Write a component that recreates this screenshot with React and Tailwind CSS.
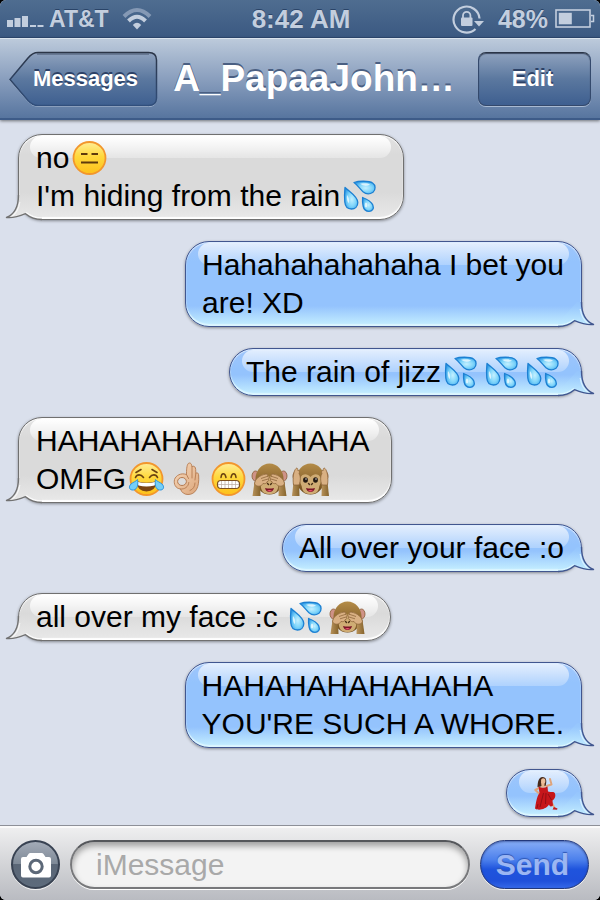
import React from "react";

function Drops() {
  return (
    <svg viewBox="0 0 41 36" className="inline-block h-9 w-[41px] align-[-8px]" role="img" aria-label="sweat droplets">
      <defs>
        <radialGradient id="drop" cx="0.55" cy="0.55" r="0.6">
          <stop offset="0" stopColor="#c4f0ff" />
          <stop offset="0.55" stopColor="#7dd4fa" />
          <stop offset="1" stopColor="#369fe8" />
        </radialGradient>
      </defs>
      <g fill="url(#drop)" stroke="#1c80d2" strokeWidth="1.3" strokeLinejoin="round">
        <path d="M5 9.5C9 13.5 17.8 18.5 17.8 24.5C17.8 28.5 15 31 11.5 31C8 31 5.2 28.5 4.8 24C4.4 19 4.5 14 5 9.5Z" />
        <path d="M14 4.5C18 3 29 2.5 32.6 5C35.8 7 35.8 12 33 14.2C30 16.2 26 16.2 23 13.7C20 11 17.5 7 14 4.5Z" />
        <path d="M22.6 19.5C26 20.8 31 23.3 32.8 27C34.4 31 32 33.3 29 33.3C25.6 33.3 23.7 31 23.1 28C22.6 25 22.4 22 22.6 19.5Z" />
      </g>
      <g fill="#fff" opacity="0.7">
        <path d="M7 17C8.5 19 9.500 21 9 25C7 24 6.500 20 7 17Z" />
        <path d="M20 5.800C24 5 28 5.200 30 6.500C27 8.500 23 8 20 5.800Z" />
        <ellipse cx="26" cy="27" rx="1.200" ry="2.500" />
      </g>
    </svg>
  );
}

function FaceBase() {
  return (
    <>
      <defs>
        <linearGradient id="face" x1="0" y1="0" x2="0" y2="1">
          <stop offset="0" stopColor="#ffee96" />
          <stop offset="0.45" stopColor="#ffd83c" />
          <stop offset="1" stopColor="#fdc01a" />
        </linearGradient>
      </defs>
      <circle cx="20.500" cy="18" r="16" fill="url(#face)" stroke="#f2962c" strokeWidth="1.800" />
    </>
  );
}

function Deadpan() {
  return (
    <svg viewBox="0 0 41 36" className="inline-block h-9 w-[41px] align-[-8px]" role="img" aria-label="expressionless face">
      <FaceBase />
      <path d="M12 14H18.500M22.500 14H29M12 22.500H29" stroke="#5e3a0c" strokeWidth="1.800" />
    </svg>
  );
}

function Joy() {
  return (
    <svg viewBox="0 0 41 36" className="inline-block h-9 w-[41px] align-[-8px]" role="img" aria-label="face with tears of joy">
      <FaceBase />
      <path d="M9.500 16.500C11 13 15 13 17.500 16.500M23.500 16.500C26 13 30 13 31.500 16.500M10 11.500L15 8.500M31 11.500L26 8.500" fill="none" stroke="#6b4310" strokeWidth="1.600" strokeLinecap="round" />
      <path d="M10 20Q20.500 23.500 31 20Q29.500 30.500 20.500 30.500Q11.500 30.500 10 20Z" fill="#7a4412" />
      <path d="M11 20.700Q20.500 23.500 30 20.700Q29.500 23 28.500 24.500Q20.500 26.500 12.500 24.500Q11.500 23 11 20.700Z" fill="#fff" />
      <g fill="#74cff8" stroke="#2690dc" strokeWidth="0.900">
        <path d="M11.500 18.500C12.500 23 11.500 28.500 7.500 29C3 29.500 2.300 25.500 5 23C7 21.200 10 20.500 11.500 18.500Z" />
        <path d="M29.500 18.500C28.500 23 29.500 28.500 33.500 29C38 29.500 38.700 25.500 36 23C34 21.200 31 20.500 29.500 18.500Z" />
      </g>
    </svg>
  );
}

function Grin() {
  return (
    <svg viewBox="0 0 41 36" className="inline-block h-9 w-[41px] align-[-8px]" role="img" aria-label="grinning face">
      <FaceBase />
      <path d="M13 16.500C13.500 11.500 17 11.500 18 16.500M23 16.500C24 11.500 27.500 11.500 28 16.500" fill="none" stroke="#6b4310" strokeWidth="1.500" strokeLinecap="round" />
      <rect x="9.500" y="19.500" width="22" height="8" rx="3.500" fill="#fff" stroke="#7d5020" strokeWidth="1.200" />
      <path d="M10 23.500H31M13.500 20V27M17 20V27M20.500 20V27M24 20V27M27.500 20V27" stroke="#b9a9a0" strokeWidth="0.700" />
    </svg>
  );
}

function OkHand() {
  return (
    <svg viewBox="0 0 41 36" className="inline-block h-9 w-[41px] align-[-8px]" role="img" aria-label="ok hand">
      <defs>
        <linearGradient id="skin" x1="0" y1="0" x2="1" y2="1">
          <stop offset="0" stopColor="#f8dabc" />
          <stop offset="1" stopColor="#dba57a" />
        </linearGradient>
      </defs>
      <path d="M19.500 13.500C19.500 10 19.500 4 21.500 2.300C23.500 1.300 24.800 3 25 6C26 4.500 28.500 5 28.700 8.500L28.800 12.500C30 11 31.700 12 31.700 15C32 20 31.500 25 29.500 28.500C27.500 32 24.500 33.500 21 33.500C17.500 33.500 14.500 31.500 13.500 28C8.500 27.500 6.500 23 7.500 18.500C8.800 14.500 14 11.500 19.500 13.500Z" fill="url(#skin)" stroke="#b47a50" strokeWidth="0.900" strokeLinejoin="round" />
      <ellipse cx="15" cy="20.500" rx="4.400" ry="4" fill="#dcdcdc" stroke="#b47a50" strokeWidth="1" />
      <path d="M19.500 13.500L21.500 17.500M13.500 28C17.500 28.500 21.500 26 21.800 21.500M25 6L25 17M28.800 12.500L28 19M23 29.500C26 28.500 28 25.500 28 22" fill="none" stroke="#b47a50" strokeWidth="0.900" strokeLinecap="round" />
    </svg>
  );
}

function MonkeyHead() {
  return (
    <>
      <defs>
        <linearGradient id="fur" x1="0" y1="0" x2="0" y2="1">
          <stop offset="0" stopColor="#b48c48" />
          <stop offset="1" stopColor="#6d4a1c" />
        </linearGradient>
        <linearGradient id="arm" x1="0" y1="0" x2="1" y2="0">
          <stop offset="0" stopColor="#b8925a" />
          <stop offset="1" stopColor="#86642c" />
        </linearGradient>
      </defs>
      <ellipse cx="6.500" cy="15" rx="3.500" ry="5" fill="#cf9287" stroke="#8a5d36" strokeWidth="0.800" />
      <ellipse cx="34.500" cy="15" rx="3.500" ry="5" fill="#cf9287" stroke="#8a5d36" strokeWidth="0.800" />
      <ellipse cx="20.500" cy="18" rx="14" ry="15.500" fill="url(#fur)" />
      <path d="M20.500 16C16 10.500 9.500 13.500 10 20C10.200 23 12 24.500 12 27C13 31.500 16 33 20.500 33C25 33 28 31.500 29 27C29 24.500 30.800 23 31 20C31.500 13.500 25 10.500 20.500 16Z" fill="#cfac74" />
      <path d="M18.500 22.500L19.500 23.500M22.500 22.500L21.500 23.500" stroke="#493015" strokeWidth="1.400" strokeLinecap="round" />
      <path d="M16 27Q20.500 28.200 25 27Q24 31 20.500 31Q17 31 16 27Z" fill="#7c1426" />
      <path d="M18 29.700Q20.500 28.500 23 29.700Q20.500 31.300 18 29.700Z" fill="#ee5672" />
    </>
  );
}

function SeeNoEvil() {
  return (
    <svg viewBox="0 0 41 36" className="inline-block h-9 w-[41px] align-[-8px]" role="img" aria-label="see-no-evil monkey">
      <MonkeyHead />
      <path d="M3.500 35L5.500 21L11 20L11.500 35Z" fill="url(#arm)" />
      <path d="M37.500 35L35.500 21L30 20L29.500 35Z" fill="url(#arm)" />
      <g fill="#d9b083" stroke="#8f673c" strokeWidth="0.800" strokeLinejoin="round">
        <path d="M5.500 23C6 18 10 14.500 17 13C19 13 19.500 14.800 18 15.500C20.500 15.500 21 17.500 19 18C20.500 19 19.500 20.800 18 20.700C18 22.500 15.500 23 14 22.500C12.500 25.500 8 26.500 5.500 23Z" />
        <path d="M35.500 23C35 18 31 14.500 24 13C22 13 21.500 14.800 23 15.500C20.500 15.500 20 17.500 22 18C20.500 19 21.500 20.800 23 20.700C23 22.500 25.500 23 27 22.500C28.500 25.500 33 26.500 35.500 23Z" />
      </g>
      <path d="M18 15.500L12 17.500M19 18L13 19.800M23 15.500L29 17.500M22 18L28 19.800" stroke="#8f673c" strokeWidth="0.800" />
    </svg>
  );
}

function HearNoEvil() {
  return (
    <svg viewBox="0 0 41 36" className="inline-block h-9 w-[41px] align-[-8px]" role="img" aria-label="hear-no-evil monkey">
      <MonkeyHead />
      <ellipse cx="15.500" cy="19" rx="2.400" ry="2.800" fill="#241a12" />
      <ellipse cx="25.500" cy="19" rx="2.400" ry="2.800" fill="#241a12" />
      <circle cx="16" cy="18" r="0.700" fill="#fff" />
      <circle cx="26" cy="18" r="0.700" fill="#fff" />
      <path d="M2 35L3.500 21L9 20.500L9.500 35Z" fill="url(#arm)" />
      <path d="M39 35L37.500 21L32 20.500L31.500 35Z" fill="url(#arm)" />
      <g fill="#d9b083" stroke="#8f673c" strokeWidth="0.800" strokeLinejoin="round">
        <path d="M3.500 24C2.500 17 3.500 10 6 7.500C7 6.500 8 7.500 7.800 9.500C9.500 9 9.800 11 9 13C10.500 14 11 20 9 24Z" />
        <path d="M37.500 24C38.500 17 37.500 10 35 7.500C34 6.500 33 7.500 33.200 9.500C31.500 9 31.200 11 32 13C30.500 14 30 20 32 24Z" />
      </g>
    </svg>
  );
}

function Dancer() {
  return (
    <svg viewBox="0 0 41 36" className="inline-block h-9 w-[41px] align-[-8px]" role="img" aria-label="dancer">
      <path d="M23.500 11L28.500 9.500L27 4M17 12.500L12.300 15L15.500 18" fill="none" stroke="#dfa57c" strokeWidth="2" strokeLinecap="round" strokeLinejoin="round" />
      <path d="M29 28L31.500 33" stroke="#e2a880" strokeWidth="2" />
      <path d="M31 32L34.500 33.500L34 34.800L29.500 34.500Z" fill="#c01a1e" />
      <path d="M14.500 12C14.500 8 15.500 2 19.500 2C23.500 2 24 6 22.500 11Z" fill="#46291a" />
      <path d="M18 7H21.500V11L24 12.500H16.500L18.500 11Z" fill="#e8b48c" />
      <ellipse cx="20.200" cy="6" rx="2.200" ry="2.800" fill="#ecbc98" />
      <path d="M15.500 11.500Q20 14 24.500 11.500L25 16.500C28 17.500 31 16 32 18.500C33 22 31.500 24 29.500 25.500L30 30.500C27.500 32.500 26.500 31 26 29.500C23 34.500 15 36 12 33.500C13 28 13.500 22 16.500 18Z" fill="#c6161b" />
      <path d="M20.500 18L17 32M23 18L22.500 29M25 19L28.500 25M15 29L14 33" stroke="#8c0d14" strokeWidth="0.900" />
    </svg>
  );
}

function ReceivedTail() {
  return (
    <svg viewBox="0 0 38 28" className="absolute bottom-[-1px] left-[-14px] h-7 w-[38px] overflow-visible" aria-hidden="true">
      <defs>
        <linearGradient id="greyTail" gradientUnits="userSpaceOnUse" x1="0" y1="0" x2="0" y2="28">
          <stop offset="0" stopColor="#dadada" />
          <stop offset="1" stopColor="#e9e9e9" />
        </linearGradient>
      </defs>
      <path d="M13.500 3C13.500 14 10 22 1.500 25.500C9 26.500 15 24 20.500 21.700C24.500 25 30 27.500 37 27.500L37 24L28 14L18 3Z" fill="url(#greyTail)" />
      <path d="M14.800 10C13.800 17 11 22 6 24.800" fill="none" stroke="#fff" strokeOpacity="0.700" strokeWidth="1.300" />
      <path d="M21 20.500C26 24.500 31 26 37 26" fill="none" stroke="#fff" strokeOpacity="0.800" strokeWidth="1.500" />
      <path d="M13.500 3C13.500 14 10 22 1.500 25.500C9 26.500 15 24 20.500 21.700C24.500 25 30 27.500 37 27.500" fill="none" stroke="#727272" strokeWidth="1.400" strokeLinejoin="round" />
    </svg>
  );
}

function SentTail() {
  return (
    <svg viewBox="0 0 38 28" className="absolute right-[-14px] bottom-[-1px] h-7 w-[38px] overflow-visible" aria-hidden="true">
      <defs>
        <linearGradient id="blueTail" gradientUnits="userSpaceOnUse" x1="0" y1="0" x2="0" y2="28">
          <stop offset="0" stopColor="#94c3fd" />
          <stop offset="0.250" stopColor="#98c8fd" />
          <stop offset="1" stopColor="#c6f0ff" />
        </linearGradient>
      </defs>
      <path d="M24.500 3C24.500 14 28 22 36.500 25.500C29 26.500 23 24 17.500 21.700C13.500 25 8 27.500 1 27.500L1 24L10 14L20 3Z" fill="url(#blueTail)" />
      <path d="M23.200 10C24.200 17 27 22 32 24.800" fill="none" stroke="#e2f6ff" strokeOpacity="0.800" strokeWidth="1.300" />
      <path d="M17 20.500C12 24.500 7 26 1 26" fill="none" stroke="#dcf6ff" strokeOpacity="0.900" strokeWidth="1.500" />
      <path d="M24.500 3C24.500 14 28 22 36.500 25.500C29 26.500 23 24 17.500 21.700C13.500 25 8 27.500 1 27.500" fill="none" stroke="#41568f" strokeWidth="1.400" strokeLinejoin="round" />
    </svg>
  );
}

function Received({ children }) {
  return (
    <li className="relative self-start rounded-[24px] border border-[#707070] bg-[linear-gradient(to_bottom,#e2e2e2_0,#dadada_20px,#dadada_calc(100%_-_27px),#e9e9e9_100%)] py-1 pr-[22px] pl-[17px] shadow-[0_1px_3px_rgba(0,0,0,0.4),inset_0_-2px_1px_#fff,inset_0_1px_1px_#fff]">
      <span className="absolute top-px right-3 left-[11px] h-[22px] rounded-[14px] bg-linear-to-b from-white to-white/30" aria-hidden="true" />
      <ReceivedTail />
      <p className="relative">{children}</p>
    </li>
  );
}

function Sent({ children }) {
  return (
    <li className="relative self-end rounded-[24px] border border-[#41568f] bg-[linear-gradient(to_bottom,#9fc6fb_0,#94c3fd_20px,#94c3fd_calc(100%_-_20px),#c6f0ff_100%)] py-1 pr-[17px] pl-4 shadow-[0_1px_3px_rgba(0,0,0,0.4),inset_0_-2px_1px_#dcf6ff,inset_0_1px_1px_#e4f0ff]">
      <span className="absolute top-px right-3 left-3 h-[22px] rounded-[14px] bg-linear-to-b from-white/70 to-white/25" aria-hidden="true" />
      <SentTail />
      <p className="relative">{children}</p>
    </li>
  );
}

function StatusBar() {
  return (
    <div className="grid h-[38px] grid-cols-[1fr_auto_1fr] items-center border-b border-[#2f4b74] bg-linear-to-b from-[#4f6d90] to-[#3b5982] pr-[5px] pl-[7px] text-[25px] leading-9 font-bold text-[#c3cede] [text-shadow:0_-1px_0_#2a4468]">
      <div className="flex items-center gap-[5px]">
        <svg viewBox="0 0 37 18" className="h-[18px] w-[37px]" fill="#c3cede" role="img" aria-label="signal strength">
          <rect x="0" y="10" width="6" height="7" />
          <rect x="7.500" y="8" width="6" height="9" />
          <rect x="15" y="6" width="6" height="11" />
          <rect x="23" y="15" width="6" height="2" />
          <rect x="30.500" y="15" width="6" height="2" />
        </svg>
        <span className="text-[23px]">AT&amp;T</span>
        <svg viewBox="0 0 30 23" className="ml-2 h-[23px] w-[30px]" role="img" aria-label="wi-fi">
          <path d="M2 9.500Q15 -3.500 28 9.500" fill="none" stroke="#8599b5" strokeWidth="4" />
          <path d="M6.500 14Q15 5.500 23.500 14" fill="none" stroke="#c3cede" strokeWidth="4" />
          <path d="M15 22.500L10.800 18Q15 13.500 19.200 18Z" fill="#c3cede" />
        </svg>
      </div>
      <span className="text-[26px]">8:42 AM</span>
      <div className="flex items-center justify-end">
        <svg viewBox="0 0 32 30" className="h-[30px] w-8" role="img" aria-label="rotation lock">
          <path d="M23.500 25A13 13 0 1 1 27.500 14.500" fill="none" stroke="#c3cede" strokeWidth="2.200" />
          <path d="M22 17H32L27 22.500Z" fill="#c3cede" />
          <rect x="9" y="13.500" width="11.500" height="8.500" rx="1" fill="#c3cede" />
          <path d="M11 14V11.500A3.700 3.700 0 0 1 18.400 11.500V14" fill="none" stroke="#c3cede" strokeWidth="1.800" />
        </svg>
        <span className="mr-[7px] ml-3.5">48%</span>
        <svg viewBox="0 0 40 20" className="h-5 w-10" role="img" aria-label="battery">
          <rect x="1" y="1" width="34" height="17" fill="none" stroke="#c3cede" strokeWidth="1.600" />
          <rect x="3.800" y="3.800" width="13" height="11.500" fill="#c3cede" />
          <path d="M36 6.500H38.500V12.500H36" fill="none" stroke="#c3cede" strokeWidth="1.500" />
        </svg>
      </div>
    </div>
  );
}

function NavBar() {
  return (
    <header className="relative z-10 flex h-[82px] items-center border-t border-b-2 border-t-[#dbe4ee] border-b-[#3d5b88] bg-linear-to-b from-[#bccadb] via-[#8a9fbe] to-[#57759f] px-[9px] shadow-[0_1px_3px_rgba(0,0,0,0.5)]">
      <button type="button" className="relative h-14 w-[149px] shrink-0 pl-1 text-center text-[22px] leading-[52px] font-bold text-white [text-shadow:0_-2px_0_#2c4166]">
        <svg viewBox="0 0 149 56" className="absolute inset-0 h-14 w-[149px]" aria-hidden="true">
          <defs>
            <linearGradient id="back" x1="0" y1="0" x2="0" y2="1">
              <stop offset="0" stopColor="#8fa2be" />
              <stop offset="0.500" stopColor="#5b789f" />
              <stop offset="1" stopColor="#3e5f90" />
            </linearGradient>
            <linearGradient id="backEdge" x1="0" y1="0" x2="0" y2="1">
              <stop offset="0" stopColor="#2b3547" />
              <stop offset="1" stopColor="#314f7c" />
            </linearGradient>
          </defs>
          <path d="M1 29.500L19 8Q23.500 2.500 29 2.500H139.500Q147.500 2.500 147.500 10V48Q147.500 55.500 139.500 55.500H29Q23.500 55.500 19 50.500Z" fill="none" stroke="#a9bad2" strokeWidth="1" />
          <path d="M1 28.500L19 7Q23.500 1.500 29 1.500H139.500Q147.500 1.500 147.500 9V47Q147.500 54.500 139.500 54.500H29Q23.500 54.500 19 49.500Z" fill="url(#back)" stroke="url(#backEdge)" strokeWidth="1.500" />
          <path d="M28 3H140" stroke="#47546c" strokeWidth="1" />
        </svg>
        <span className="relative">Messages</span>
      </button>
      <h1 className="min-w-0 flex-1 truncate pr-2 text-center text-[37px] leading-[50px] font-bold text-white [text-shadow:0_-2px_0_#4a5f82]">A_PapaaJohn…</h1>
      <button type="button" className="h-[54px] w-[113px] shrink-0 rounded-lg border border-[#34496c] border-t-[#2b3547] bg-linear-to-b from-[#8fa2be] via-[#5b789f] to-[#3e5f90] pr-1 text-[22px] leading-[50px] font-bold text-white shadow-[0_1px_0_#a9bad2,inset_0_1px_1px_#3f4c63] [text-shadow:0_-2px_0_#2c4166]">
        Edit
      </button>
    </header>
  );
}

function Composer() {
  return (
    <form onSubmit={(e) => e.preventDefault()} className="flex h-[75px] items-start gap-2.5 border-t border-[#8d9098] bg-linear-to-b from-[#f0f0f1] via-[#d4d5d8] to-[#b9bbc1] px-[11px] pt-3.5 shadow-[inset_0_2px_0_#fafafa]">
      <button type="button" aria-label="Attach photo" className="flex size-[49px] shrink-0 items-center justify-center rounded-full border-2 border-[#384252] bg-[linear-gradient(to_bottom,#a3abb7_0%,#7d8896_50%,#5a6676_50%,#5d6b7c_100%)] shadow-[0_1px_0_#f4f4f4]">
        <svg viewBox="0 0 32 26" className="h-[26px] w-8" aria-hidden="true">
          <path d="M3 5H6.500L8.500 2Q9 1 10.500 1H21.500Q23 1 23.500 2L25.500 5H29Q31 5 31 7V23.500Q31 25.500 29 25.500H3Q1 25.500 1 23.500V7Q1 5 3 5Z" fill="#fff" />
          <circle cx="16" cy="14.500" r="6.200" fill="#fff" stroke="#5c6878" strokeWidth="3" />
        </svg>
      </button>
      <input type="text" aria-label="iMessage" placeholder="iMessage" className="h-[49px] min-w-0 flex-1 rounded-full border-2 border-[#77787b] border-t-[#55575b] bg-[#f3f3f3] px-6 text-[30px] text-black shadow-[0_1px_0_#fff,inset_0_4px_6px_rgba(0,0,0,0.35)] outline-none placeholder:text-[#a9a9a9]" />
      <button type="submit" className="h-[49px] w-[109px] shrink-0 rounded-full border border-[#22387c] bg-[linear-gradient(to_bottom,#87adf6_0%,#4c80ec_40%,#1f54dd_60%,#1f50da_85%,#3568e8_100%)] pr-1 text-[30px] leading-[46px] font-bold text-[#9bb6f3] shadow-[0_1px_0_#f4f4f4,inset_0_1px_2px_rgba(20,40,110,0.5)] [text-shadow:0_-1px_1px_#2f57b4]">
        Send
      </button>
    </form>
  );
}

export default function App() {
  return (
    <div className="min-h-screen bg-black">
      <div className="flex min-h-screen flex-col overflow-hidden rounded-md bg-[#dae0ec] font-['Liberation_Sans',Arial,sans-serif]">
        <StatusBar />
        <NavBar />
        <main className="flex-1 px-[18px] pt-3.5 pb-[7px]">
          <ul className="flex flex-col gap-[21px] text-[30px] leading-[38px] text-black">
            <Received>
              no<Deadpan />
              <br />
              I'm hiding from the rain<Drops />
            </Received>
            <Sent>
              Hahahahahahaha I bet you
              <br />
              are! XD
            </Sent>
            <Sent>
              The rain of jizz<Drops /><Drops /><Drops />
            </Sent>
            <Received>
              HAHAHAHAHAHAHAHA
              <br />
              OMFG<Joy /><OkHand /><Grin /><SeeNoEvil /><HearNoEvil />
            </Received>
            <Sent>All over your face :o</Sent>
            <Received>
              all over my face :c <Drops /><SeeNoEvil />
            </Received>
            <Sent>
              HAHAHAHAHAHAHA
              <br />
              YOU'RE SUCH A WHORE.
            </Sent>
            <Sent>
              <Dancer />
            </Sent>
          </ul>
        </main>
        <Composer />
      </div>
    </div>
  );
}
